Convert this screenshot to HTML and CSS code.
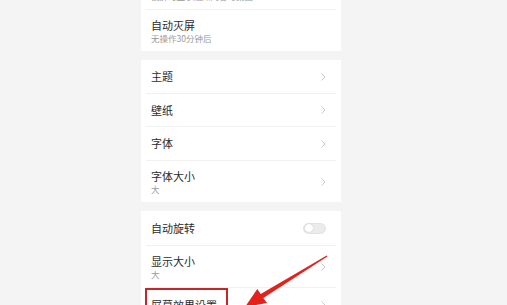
FILE: index.html
```html
<!DOCTYPE html>
<html lang="zh">
<head>
<meta charset="utf-8">
<link rel="stylesheet" href="styles.css">
</head>
<body>
<div class="screen">
  <div class="card">
    <div class="row row-2"><div class="text"><div class="title">锁屏时间与密码设置</div><div class="sub">锁屏时显示通知内容与桌面</div></div></div>
    <div class="row row-2"><div class="text"><div class="title">自动灭屏</div><div class="sub">无操作30分钟后</div></div></div>
  </div>
  <div class="card">
    <div class="row"><div class="text"><div class="title">主题</div></div><svg class="chev" viewBox="0 0 5 8"><polyline points="0.5,0.5 4,4 0.5,7.5"/></svg></div>
    <div class="row row-b"><div class="text"><div class="title">壁纸</div></div><svg class="chev" viewBox="0 0 5 8"><polyline points="0.5,0.5 4,4 0.5,7.5"/></svg></div>
    <div class="row"><div class="text"><div class="title">字体</div></div><svg class="chev" viewBox="0 0 5 8"><polyline points="0.5,0.5 4,4 0.5,7.5"/></svg></div>
    <div class="row row-2"><div class="text"><div class="title">字体大小</div><div class="sub">大</div></div><svg class="chev" viewBox="0 0 5 8"><polyline points="0.5,0.5 4,4 0.5,7.5"/></svg></div>
  </div>
  <div class="card">
    <div class="row row-c"><div class="text"><div class="title">自动旋转</div></div><span class="toggle"><span class="knob"></span></span></div>
    <div class="row row-2 row-d"><div class="text"><div class="title">显示大小</div><div class="sub">大</div></div><svg class="chev" viewBox="0 0 5 8"><polyline points="0.5,0.5 4,4 0.5,7.5"/></svg></div>
    <div class="row"><div class="text"><div class="title"><span class="mark">屏幕效果设置</span></div></div><svg class="chev" viewBox="0 0 5 8"><polyline points="0.5,0.5 4,4 0.5,7.5"/></svg></div>
  </div>
</div>
<svg class="arrow" viewBox="0 0 507 305" width="507" height="305">
  <polygon points="326.7,255.4 260.7,293.9 257.3,289 245,307 267,303 263.3,298.1 327.4,256.6"/>
</svg>
</body>
</html>
```
FILE: styles.css
```css
html, body {
  margin: 0;
  padding: 0;
  background: #f4f4f4;
  overflow: hidden;
}
body {
  width: 507px;
  height: 305px;
  position: relative;
  font-family: "Noto Sans CJK SC", "Noto Sans", sans-serif;
}
.screen {
  margin-left: 141px;
  width: 200px;
  margin-top: -31px;
  display: flex;
  flex-direction: column;
  gap: 9px;
}
.card {
  background: #ffffff;
  display: flex;
  flex-direction: column;
}
.row {
  height: 34px;
  margin: 0 5px;
  padding: 0 10px 0 5px;
  display: flex;
  align-items: center;
  justify-content: space-between;
  border-bottom: 1px solid #f1f1f1;
  box-sizing: border-box;
}
.row:last-child { border-bottom: none; }
.row-b { height: 33px; }
.row-2 { height: 41px; }
.row-c { height: 35px; }
.row-d { height: 42px; }
.text { display: flex; flex-direction: column; gap: 1px; }
.title {
  font-size: 11px;
  line-height: 13px;
  color: #2b2b2b;
  white-space: nowrap;
}
.sub {
  font-size: 8.5px;
  line-height: 10px;
  color: #9a9a9a;
  white-space: nowrap;
}
.chev {
  width: 5px;
  height: 8px;
  fill: none;
  stroke: #c9c9c9;
  stroke-width: 1;
}
.toggle {
  width: 23px;
  height: 11px;
  box-sizing: border-box;
  border-radius: 6px;
  background: #ebebeb;
  border: 1px solid #e2e2e2;
  display: flex;
  align-items: center;
  padding: 0 1px;
}
.knob {
  width: 8px;
  height: 8px;
  border-radius: 50%;
  background: #ffffff;
  box-shadow: 0 0 1px rgba(0,0,0,0.25);
}
.mark {
  position: relative;
}
.mark::before {
  content: "";
  position: absolute;
  left: -6px;
  right: -11px;
  top: -9px;
  bottom: -9px;
  border: 2px solid #c3262b;
}
.arrow {
  position: absolute;
  left: 0;
  top: 0;
}
.arrow polygon {
  fill: #e3221c;
}
```
